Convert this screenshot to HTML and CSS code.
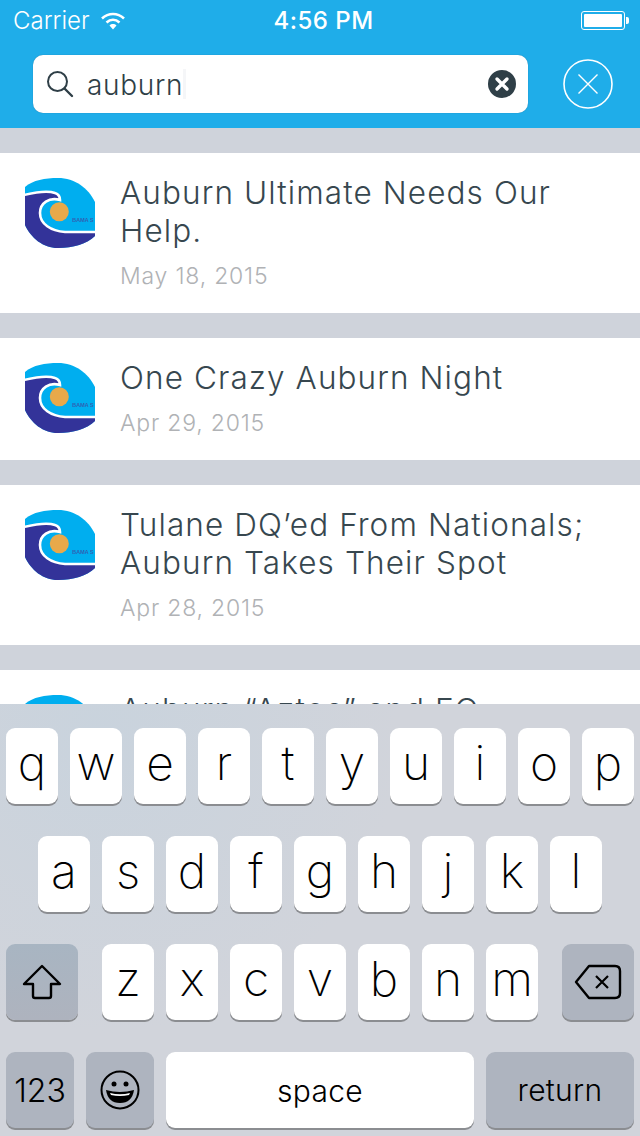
FILE: index.html
```html
<!DOCTYPE html>
<html lang="en">
<head>
  <meta charset="UTF-8" />
  <meta name="viewport" content="width=device-width, initial-scale=1.0"/>
  <title>Search</title>
  <link rel="stylesheet" href="styles.css">
</head>
<body>
  <svg class="defs" width="0" height="0">
    <defs>
      <clipPath id="logoClip"><path d="M0 9 C8 2 20 0 33 0 C50 0 63 10 70 24 L70 58 C62 66 48 70 33 70 C18 70 6 60 0 47 Z"/></clipPath>
      <symbol id="logo" viewBox="0 0 70 70">
        <g clip-path="url(#logoClip)">
          <rect x="0" y="0" width="70" height="70" fill="#00aeef"/>
          <path d="M-5 18 C10 14 22 12 30 15 C33 16 35 19 35 22 C24 19 15 25 15 35 C15 46 26 53 40 54 L75 54 L75 75 L-5 75 Z" fill="#333399" stroke="#fff" stroke-width="2.6"/>
          <circle cx="34.3" cy="33.7" r="9.5" fill="#e8a94a"/>
          <text x="47" y="44" class="logo-text">BAMA S</text>
        </g>
      </symbol>
    </defs>
  </svg>

  <header class="top">
    <div class="status">
      <div class="status-left">
        <span>Carrier</span>
        <svg class="wifi" width="26" height="20" viewBox="0 0 26 20">
          <path d="M2 7.5 C8.5 1.5 17.5 1.5 24 7.5" fill="none" stroke="#fff" stroke-width="2.6"/>
          <path d="M6.5 11.5 C10.5 8 15.5 8 19.5 11.5" fill="none" stroke="#fff" stroke-width="2.6"/>
          <path d="M9.5 14.5 C11.5 12.6 14.5 12.6 16.5 14.5 L13 18.5 Z" fill="#fff"/>
        </svg>
      </div>
      <div class="time">4:56 PM</div>
      <div class="status-right">
        <div class="battery"><div class="battery-fill"></div></div>
        <div class="battery-tip"></div>
      </div>
    </div>
    <div class="search-row">
      <div class="search-box">
        <svg class="search-icon" width="28" height="28" viewBox="0 0 28 28">
          <circle cx="11.5" cy="11.5" r="9.5" fill="none" stroke="#2f3f47" stroke-width="2"/>
          <path d="M18.5 18.5 L26 26" stroke="#2f3f47" stroke-width="2.4" stroke-linecap="round"/>
        </svg>
        <span class="search-text">auburn</span>
        <span class="cursor"></span>
        <svg class="clear" width="28" height="28" viewBox="0 0 28 28">
          <circle cx="14" cy="14" r="14" fill="#2f3f47"/>
          <path d="M9 9 L19 19 M19 9 L9 19" stroke="#fff" stroke-width="3.4" stroke-linecap="round"/>
        </svg>
      </div>
      <svg class="close" width="50" height="50" viewBox="0 0 50 50">
        <circle cx="25" cy="25" r="24" fill="none" stroke="#fff" stroke-width="1.6"/>
        <path d="M15.5 15.5 L34.5 34.5 M34.5 15.5 L15.5 34.5" stroke="#fff" stroke-width="1.4"/>
      </svg>
    </div>
  </header>

  <main class="results">
    <article class="card">
      <svg class="thumb"><use href="#logo"/></svg>
      <div class="card-body">
        <h2>Auburn Ultimate Needs Our Help.</h2>
        <p>May 18, 2015</p>
      </div>
    </article>
    <article class="card">
      <svg class="thumb"><use href="#logo"/></svg>
      <div class="card-body">
        <h2>One Crazy Auburn Night</h2>
        <p>Apr 29, 2015</p>
      </div>
    </article>
    <article class="card">
      <svg class="thumb"><use href="#logo"/></svg>
      <div class="card-body">
        <h2>Tulane DQ’ed From Nationals; Auburn Takes Their Spot</h2>
        <p>Apr 28, 2015</p>
      </div>
    </article>
    <article class="card">
      <svg class="thumb"><use href="#logo"/></svg>
      <div class="card-body">
        <h2>Auburn “Aztec” and EC</h2>
      </div>
    </article>
  </main>

  <!-- Keyboard sits over the list -->
  <section class="keyboard">
    <div class="kb-row">
      <div class="key">q</div><div class="key">w</div><div class="key">e</div><div class="key">r</div><div class="key">t</div>
      <div class="key">y</div><div class="key">u</div><div class="key">i</div><div class="key">o</div><div class="key">p</div>
    </div>
    <div class="kb-row">
      <div class="key">a</div><div class="key">s</div><div class="key">d</div><div class="key">f</div><div class="key">g</div>
      <div class="key">h</div><div class="key">j</div><div class="key">k</div><div class="key">l</div>
    </div>
    <div class="kb-row kb-row-spread">
      <div class="key key-dark key-shift key-wide">
        <svg width="40" height="36" viewBox="0 0 40 36">
          <path d="M20 2 L38 20 L29 20 L29 32 Q29 34 27 34 L13 34 Q11 34 11 32 L11 20 L2 20 Z" fill="none" stroke="#000" stroke-width="2.4" stroke-linejoin="round"/>
        </svg>
      </div>
      <div class="kb-letters">
        <div class="key">z</div><div class="key">x</div><div class="key">c</div><div class="key">v</div>
        <div class="key">b</div><div class="key">n</div><div class="key">m</div>
      </div>
      <div class="key key-dark key-wide">
        <svg width="48" height="36" viewBox="0 0 48 36">
          <path d="M15 2 L41 2 Q46 2 46 7 L46 29 Q46 34 41 34 L15 34 L2 18 Z" fill="none" stroke="#000" stroke-width="2.4" stroke-linejoin="round"/>
          <path d="M22 12 L34 24 M34 12 L22 24" stroke="#000" stroke-width="2.2"/>
        </svg>
      </div>
    </div>
    <div class="kb-row kb-row-bottom">
      <div class="key key-dark key-num">123</div>
      <div class="key key-dark key-num">
        <svg width="40" height="40" viewBox="0 0 40 40">
          <circle cx="20" cy="20" r="18.5" fill="none" stroke="#000" stroke-width="2"/>
          <circle cx="14" cy="14" r="2.5"/>
          <circle cx="26" cy="14" r="2.5"/>
          <path d="M6 20 Q20 24 34 20 Q32 33 20 33 Q8 33 6 20 Z"/>
          <path d="M10 23 Q20 25.5 30 23 L29 25 Q20 27 11 25 Z" fill="#fff"/>
        </svg>
      </div>
      <div class="key key-space">space</div>
      <div class="key key-dark key-return">return</div>
    </div>
  </section>
</body>
</html>
```

FILE: styles.css
```css
html, body {
  margin: 0;
  padding: 0;
}

body {
  position: relative;
  width: 640px;
  height: 1136px;
  overflow: hidden;
  background: #cfd3db;
  font-family: Inter, "Liberation Sans", sans-serif;
}

.defs {
  position: absolute;
}

.logo-text {
  font-family: "Liberation Sans", sans-serif;
  font-size: 5.5px;
  font-weight: 700;
  fill: #2f5fb0;
}

/* Header */
.top {
  height: 128px;
  background: #1fade9;
  color: #fff;
}

.status {
  display: flex;
  align-items: center;
  justify-content: space-between;
  height: 41px;
  padding: 0 11px 0 13px;
  font-size: 24px;
  position: relative;
}

.status-left {
  display: flex;
  align-items: center;
  gap: 10px;
  width: 200px;
  font-weight: 300;
}

.time {
  margin-left: 5px;
  font-weight: 500;
  letter-spacing: 0.5px;
}

.status-right {
  display: flex;
  align-items: center;
  justify-content: flex-end;
  width: 200px;
}

.battery {
  width: 44px;
  height: 19px;
  box-sizing: border-box;
  border: 1px solid #fff;
  border-radius: 3px;
  padding: 2px;
}

.battery-fill {
  height: 100%;
  background: #fff;
  border-radius: 1px;
}

.battery-tip {
  width: 3px;
  height: 7px;
  background: #fff;
  border-radius: 0 2px 2px 0;
  margin-left: 1px;
}

.search-row {
  display: flex;
  align-items: center;
  padding: 14px 27px 0 33px;
  justify-content: space-between;
}

.search-box {
  display: flex;
  align-items: center;
  width: 495px;
  height: 58px;
  box-sizing: border-box;
  padding: 0 12px 0 13px;
  background: #fff;
  border-radius: 10px;
  box-shadow: 0 0 1px rgba(40, 80, 110, 0.6);
}

.search-text {
  margin-left: 13px;
  padding-top: 2px;
  font-size: 28px;
  font-weight: 300;
  letter-spacing: 0.7px;
  color: #2f3f47;
}

.cursor {
  width: 3px;
  height: 30px;
  background: #f5f6f8;
}

.clear {
  margin-left: auto;
}

/* Results */
.results {
  padding-top: 25px;
}

.card {
  display: flex;
  gap: 26px;
  padding: 25px 20px 25px 25px;
  margin-bottom: 25px;
  background: #fff;
}

.thumb {
  flex: none;
  width: 70px;
  height: 70px;
  filter: blur(0.4px);
}

.card-body {
  margin-left: -1px;
}

.card-body h2 {
  margin: -4px 0 0;
  font-size: 31.5px;
  font-weight: 300;
  line-height: 38px;
  letter-spacing: 1.1px;
  color: #37474f;
}

.card-body p {
  margin: 12px 0 -2px;
  font-size: 23px;
  font-weight: 300;
  line-height: 28px;
  letter-spacing: 0.8px;
  color: #b0b2b5;
}

/* Keyboard */
.keyboard {
  position: absolute;
  left: 0;
  right: 0;
  bottom: 0;
  height: 432px;
  box-sizing: border-box;
  padding-top: 24px;
  background: radial-gradient(circle at 100px 30px, #c9d3dd, rgba(201, 211, 221, 0) 300px), #d1d4db;
}

.kb-row {
  display: flex;
  justify-content: center;
  gap: 12px;
  height: 76px;
  margin-bottom: 32px;
}

.kb-row-spread {
  justify-content: space-between;
  padding: 0 6px;
}

.kb-letters {
  display: flex;
  gap: 12px;
}

.kb-row-bottom {
  justify-content: flex-start;
  padding: 0 6px;
  margin-bottom: 0;
}

.key {
  display: flex;
  align-items: center;
  justify-content: center;
  width: 52px;
  height: 76px;
  background: #fff;
  border-radius: 9px;
  box-shadow: 0 2px 0 #8b8d91;
  font-size: 48px;
  font-weight: 250;
  color: #000;
  padding-bottom: 8px;
  box-sizing: border-box;
}

.key-dark {
  background: #aeb4bf;
  padding-bottom: 0;
}

.key-shift {
  background: linear-gradient(#a8b5c2, #aeb3be);
}

.key-wide {
  width: 72px;
}

.key-num {
  width: 68px;
  font-size: 32px;
  font-weight: 300;
}

.key-space {
  width: 308px;
  padding-bottom: 0;
  padding-top: 2px;
  font-size: 30px;
  font-weight: 300;
  letter-spacing: 0.3px;
}

.key-return {
  width: 148px;
  font-size: 30px;
  font-weight: 300;
  letter-spacing: 0.3px;
}
```
